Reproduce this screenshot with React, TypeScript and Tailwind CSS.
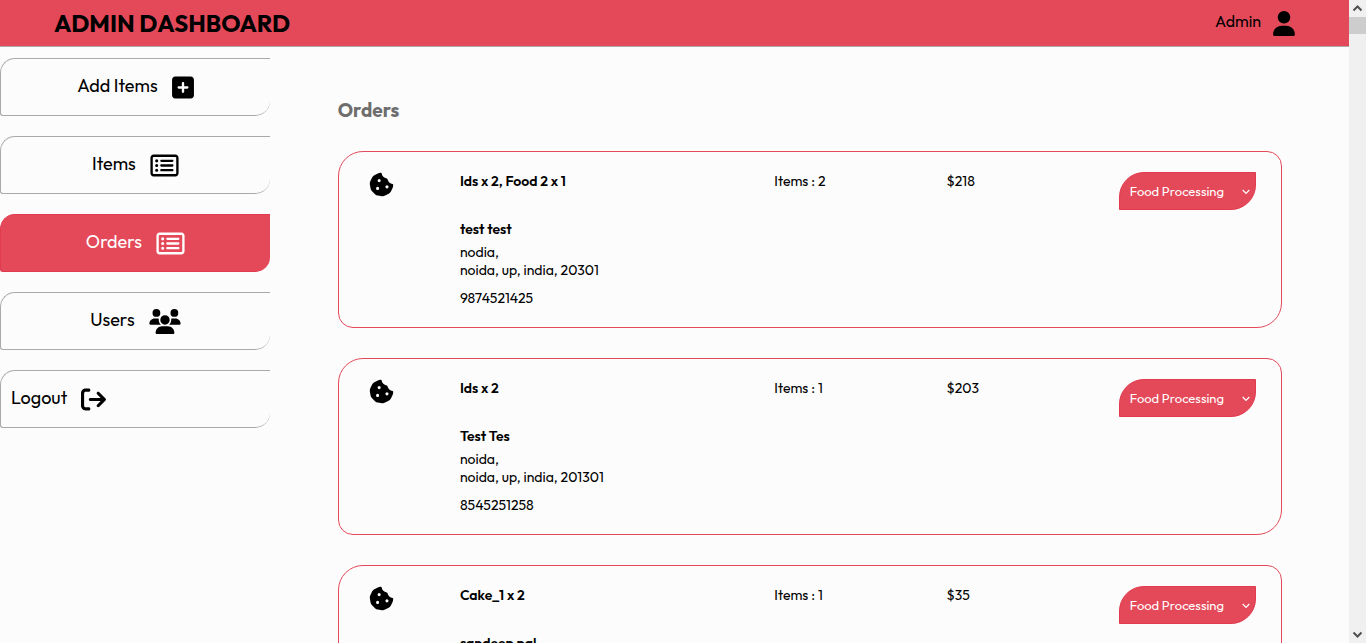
import { useState, type ReactNode } from "react";
import {
  FaArrowRightFromBracket,
  FaCookieBite,
  FaRegRectangleList,
  FaSquarePlus,
  FaUser,
  FaUsers,
} from "react-icons/fa6";
import { clsx } from "clsx";

type Order = {
  id: number;
  summary: string;
  name: string;
  address?: string[];
  phone?: string;
  items: number;
  amount: number;
};

const orders: Order[] = [
  {
    id: 1,
    summary: "Ids x 2, Food 2 x 1",
    name: "test test",
    address: ["nodia,", "noida, up, india, 20301"],
    phone: "9874521425",
    items: 2,
    amount: 218,
  },
  {
    id: 2,
    summary: "Ids x 2",
    name: "Test Tes",
    address: ["noida,", "noida, up, india, 201301"],
    phone: "8545251258",
    items: 1,
    amount: 203,
  },
  {
    id: 3,
    summary: "Cake_1 x 2",
    name: "sandeep pal",
    items: 1,
    amount: 35,
  },
];

function NavLink({
  label,
  icon,
  active = false,
}: {
  label: string;
  icon: ReactNode;
  active?: boolean;
}) {
  return (
    <a
      href="#"
      aria-current={active ? "page" : undefined}
      className={clsx(
        "flex h-[58px] items-center justify-center gap-3.5 rounded-tl-[15px] rounded-br-[15px] rounded-bl-[3px] border border-r-0 text-lg leading-6",
        active
          ? "border-[#e23a4e] bg-[#e44959] text-white"
          : "border-[#a9a9a9] text-black",
      )}
    >
      <span className="pb-0.5">{label}</span>
      {icon}
    </a>
  );
}

function Sidebar() {
  return (
    <nav className="flex w-1/5 shrink-0 flex-col gap-5 pt-[11px]">
      <NavLink
        label="Add Items"
        icon={<FaSquarePlus className="h-[25px] w-[22px]" />}
      />
      <NavLink
        label="Items"
        icon={<FaRegRectangleList className="h-[25px] w-[29px]" />}
      />
      <NavLink
        label="Orders"
        icon={<FaRegRectangleList className="h-[25px] w-[29px]" />}
        active
      />
      <NavLink
        label="Users"
        icon={<FaUsers className="h-[25px] w-[32px]" />}
      />
      <button
        type="button"
        className="flex h-[58px] items-center gap-3.5 rounded-tl-[15px] rounded-br-[15px] rounded-bl-[3px] border border-r-0 border-[#a9a9a9] pl-2.5 text-lg leading-6"
      >
        <span className="pb-0.5">Logout</span>
        <FaArrowRightFromBracket className="size-[25px]" />
      </button>
    </nav>
  );
}

function StatusSelect({ id }: { id: number }) {
  const [status, setStatus] = useState("Food Processing");
  return (
    <div className="relative w-[137px]">
      <select
        id={`status-${id}`}
        aria-label="Order status"
        value={status}
        onChange={(event) => setStatus(event.target.value)}
        className="block h-[38px] w-full appearance-none rounded-tl-[25px] rounded-br-[25px] border border-[#e23a4e] bg-[#e44959] pl-2.5 text-[13px] text-white outline-none"
      >
        <option>Food Processing</option>
        <option>Out for delivery</option>
        <option>Delivered</option>
      </select>
      <svg
        aria-hidden="true"
        viewBox="0 0 8 6"
        className="pointer-events-none absolute top-[17px] right-1.5 h-1.5 w-2"
        fill="none"
        stroke="white"
        strokeWidth="1.2"
      >
        <path d="M0.7 1 4 4.5 7.3 1" />
      </svg>
    </div>
  );
}

function OrderCard({ order }: { order: Order }) {
  return (
    <article className="grid grid-cols-[0.5fr_2fr_1fr_1fr_1fr] items-start gap-[30px] rounded-tl-[25px] rounded-tr-[15px] rounded-br-[25px] rounded-bl-[15px] border border-[#e44959] p-5 text-sm leading-[18px]">
      <FaCookieBite className="ml-2.5 size-[25px]" />
      <div>
        <p className="font-semibold">{order.summary}</p>
        <p className="mt-[30px] font-semibold">{order.name}</p>
        {order.address && (
          <div className="mt-[5px]">
            {order.address.map((line) => (
              <p key={line}>{line}</p>
            ))}
          </div>
        )}
        {order.phone && <p className="mt-2.5">{order.phone}</p>}
      </div>
      <p>Items : {order.items}</p>
      <p>${order.amount}</p>
      <StatusSelect id={order.id} />
    </article>
  );
}

function Chevron({ up = false }: { up?: boolean }) {
  return (
    <svg
      aria-hidden="true"
      viewBox="0 0 17 17"
      className={clsx("size-[17px]", !up && "rotate-180")}
      fill="none"
      stroke="#505050"
      strokeWidth="2"
    >
      <path d="M4.5 10.5 8.5 6.5 12.5 10.5" />
    </svg>
  );
}

function ScrollTrack() {
  return (
    <div
      aria-hidden="true"
      className="flex w-[17px] shrink-0 flex-col justify-between bg-[#f0f0f0]"
    >
      <div>
        <Chevron up />
        <div className="h-[17px] bg-[#cdcdcd]" />
      </div>
      <Chevron />
    </div>
  );
}

export default function App() {
  return (
    <div className="flex h-screen bg-[#fcfcfc] font-[Outfit,Lato,sans-serif] text-black">
      <div className="min-w-0 flex-1 overflow-y-auto [scrollbar-width:none]">
        <header className="flex h-[47px] items-center justify-between border-b border-[#a9a9a9] bg-[#e44959] px-[4%]">
          <h1 className="text-2xl leading-8 font-bold">ADMIN DASHBOARD</h1>
          <div className="flex items-center gap-3">
            <span className="pb-1 text-base leading-5">Admin</span>
            <FaUser className="h-[25px] w-[22px]" />
          </div>
        </header>
        <div className="flex items-start">
          <Sidebar />
          <main className="min-w-0 flex-1 pt-[51px] pr-[67px] pl-[68px]">
            <h2 className="text-[19px] leading-6 font-bold text-[#6d6d6d]">
              Orders
            </h2>
            <div className="mt-[29px] flex flex-col gap-[30px]">
              {orders.map((order) => (
                <OrderCard key={order.id} order={order} />
              ))}
            </div>
          </main>
        </div>
      </div>
      <ScrollTrack />
    </div>
  );
}
